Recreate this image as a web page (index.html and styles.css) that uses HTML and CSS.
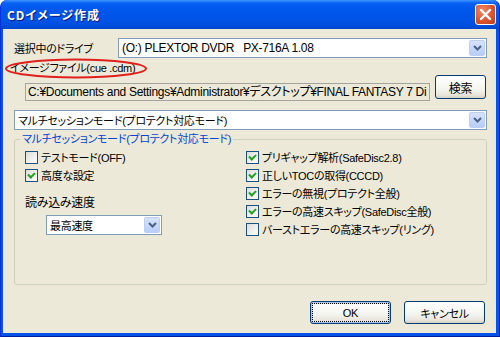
FILE: index.html
```html
<!DOCTYPE html>
<html lang="ja">
<head>
    <meta charset="UTF-8">
    <title>CDイメージ作成</title>
    <link rel="stylesheet" href="styles.css">
</head>
<body>
<div class="window">
    <div class="titlebar">
        <span class="title">CDイメージ作成</span>
        <span class="close">
            <svg width="13" height="13" viewBox="0 0 13 13"><path d="M2 2 L11 11 M11 2 L2 11" stroke="#fff" stroke-width="2.4" stroke-linecap="round"/></svg>
        </span>
    </div>
    <div class="client">
        <!-- drive -->
        <div class="row drive-row">
            <span class="label">選択中のドライブ</span>
            <div class="combo grow">
                <span class="combo-text">(O:) PLEXTOR DVDR   PX-716A 1.08</span>
                <span class="drop"><svg width="9" height="6" viewBox="0 0 9 6"><path d="M1 1 L4.5 4.5 L8 1" fill="none" stroke="#4d6185" stroke-width="2"/></svg></span>
            </div>
        </div>

        <!-- image file -->
        <div class="image-label">
            <span>イメージファイル(cue .cdm)</span>
            <svg class="ring" width="144" height="21" viewBox="0 0 144 21"><ellipse cx="72" cy="10.5" rx="70" ry="9" fill="none" stroke="#e0201c" stroke-width="2"/></svg>
        </div>
        <div class="row path-row">
            <div class="pathbox">C:¥Documents and Settings¥Administrator¥デスクトップ¥FINAL FANTASY 7 Di</div>
            <span class="btn search">検索</span>
        </div>

        <!-- mode -->
        <div class="combo mode">
            <span class="combo-text">マルチセッションモード(プロテクト対応モード)</span>
            <span class="drop"><svg width="9" height="6" viewBox="0 0 9 6"><path d="M1 1 L4.5 4.5 L8 1" fill="none" stroke="#4d6185" stroke-width="2"/></svg></span>
        </div>

        <fieldset class="group">
            <legend>マルチセッションモード(プロテクト対応モード)</legend>
            <div class="cols">
                <div class="col left">
                    <div class="check"><span class="box"></span>テストモード(OFF)</div>
                    <div class="check"><span class="box on"></span>高度な設定</div>
                    <div class="speed-label">読み込み速度</div>
                    <div class="combo speed">
                        <span class="combo-text">最高速度</span>
                        <span class="drop"><svg width="9" height="6" viewBox="0 0 9 6"><path d="M1 1 L4.5 4.5 L8 1" fill="none" stroke="#4d6185" stroke-width="2"/></svg></span>
                    </div>
                </div>
                <div class="col right">
                    <div class="check"><span class="box on"></span>プリギャップ解析(SafeDisc2.8)</div>
                    <div class="check"><span class="box on"></span>正しいTOCの取得(CCCD)</div>
                    <div class="check"><span class="box on"></span>エラーの無視(プロテクト全般)</div>
                    <div class="check"><span class="box on"></span>エラーの高速スキップ(SafeDisc全般)</div>
                    <div class="check"><span class="box"></span>バーストエラーの高速スキップ(リング)</div>
                </div>
            </div>
        </fieldset>

        <div class="actions">
            <span class="btn ok"><span class="focus">OK</span></span>
            <span class="btn cancel">キャンセル</span>
        </div>
    </div>
</div>
</body>
</html>
```

FILE: styles.css
```css
body {
    margin: 0;
    background: #fff;
    font-family: "Liberation Sans", "Noto Sans CJK JP", sans-serif;
    font-size: 11px;
    font-feature-settings: "palt";
    letter-spacing: -0.3px;
    color: #000;
}
.window {
    width: 500px;
    height: 337px;
    box-sizing: border-box;
    background: #0553e4;
    border-radius: 7px 7px 0 0;
    border-left: 1px solid #0831d9;
    border-bottom: 1px solid #001ea0;
    border-right: 1px solid #001ea0;
}
.titlebar {
    height: 29px;
    display: flex;
    align-items: center;
    border-radius: 7px 7px 0 0;
    background: linear-gradient(#3d95ff 0, #0a62f4 3px, #0058ee 8px, #0055e8 18px, #0050de 25px, #0046cc 29px);
}
.title {
    flex: 1;
    padding-left: 6px;
    color: #fff;
    font-family: "Noto Sans CJK JP", sans-serif;
    font-weight: bold;
    font-size: 12px;
    letter-spacing: 1px;
    text-shadow: 1px 1px #0a1883;
}
.close {
    width: 19px;
    height: 19px;
    margin-right: 3px;
    border: 1px solid #fff;
    border-radius: 3px;
    background: radial-gradient(circle at 35% 30%, #f08a6a, #d9552f 55%, #c23a17);
    display: flex;
    align-items: center;
    justify-content: center;
}
.client {
    height: 304px;
    margin: 0 3px 0 2px;
    padding: 9px 9px 0 11px;
    box-sizing: border-box;
    background: #ece9d8;
}
.row {
    display: flex;
}
.drive-row {
    align-items: center;
    height: 20px;
}
.drive-row .label {
    width: 104px;
}
.drive-row .combo {
    font-size: 12px;
}
.grow {
    flex: 1;
}
.combo {
    display: flex;
    align-items: center;
    height: 20px;
    box-sizing: border-box;
    border: 1px solid #7f9db9;
    background: #fff;
    padding: 0 1px 0 3px;
}
.combo-text {
    flex: 1;
    white-space: pre;
    overflow: hidden;
}
.drop {
    width: 16px;
    height: 16px;
    box-sizing: border-box;
    border: 1px solid #bccdf6;
    border-radius: 2px;
    background: linear-gradient(#d6e3fd, #b9cdf8);
    display: flex;
    align-items: center;
    justify-content: center;
}
.image-label {
    position: relative;
    height: 17px;
    line-height: 21px;
    margin-left: -4px;
}
.ring {
    position: absolute;
    left: -6px;
    top: 0;
}
.path-row {
    height: 26px;
    align-items: flex-start;
}
.pathbox {
    width: 405px;
    height: 18px;
    margin: 8px 0 0 11px;
    box-sizing: border-box;
    border: 1px solid #a5a49c;
    padding-left: 2px;
    font-size: 12px;
    line-height: 16px;
    white-space: nowrap;
    overflow: hidden;
}
.btn {
    display: flex;
    align-items: center;
    justify-content: center;
    box-sizing: border-box;
    border: 1px solid #003c74;
    border-radius: 3px;
    background: linear-gradient(#fff, #f4f4ef 60%, #e8e6dd 85%, #d6d0c5);
}
.search {
    width: 51px;
    height: 24px;
    margin-left: auto;
    margin-right: 1px;
    font-size: 12px;
}
.mode {
    margin-top: 9px;
}
.group {
    margin: 2px 0 0 0;
    padding: 2px 0 0 0;
    width: 473px;
    height: 153px;
    box-sizing: border-box;
    border: 1px solid #d0d0bf;
    border-radius: 3px;
}
.group legend {
    margin-left: 5px;
    padding: 0 2px;
    color: #0046d5;
    line-height: 14px;
}
.cols {
    display: flex;
}
.left {
    width: 221px;
    padding-left: 10px;
}
.check {
    display: flex;
    align-items: center;
    height: 18px;
    gap: 3px;
    white-space: nowrap;
}
.box {
    width: 13px;
    height: 13px;
    box-sizing: border-box;
    border: 1px solid #1c5180;
    background: linear-gradient(135deg, #dcdcd7, #fff);
    display: flex;
    align-items: center;
    justify-content: center;
}
.box.on::after {
    content: "";
    width: 5px;
    height: 3px;
    margin-top: -2px;
    border-left: 2px solid #21a121;
    border-bottom: 2px solid #21a121;
    transform: rotate(-45deg);
}
.speed-label {
    margin-top: 11px;
    height: 16px;
    line-height: 16px;
    font-size: 12px;
}
.speed {
    width: 116px;
    margin: 4px 0 0 21px;
}
.actions {
    display: flex;
    justify-content: flex-end;
    gap: 13px;
    margin-top: 16px;
    margin-right: 2px;
}
.actions .btn {
    width: 81px;
    height: 23px;
}
.ok {
    box-shadow: inset 0 0 0 1px #a8c6f2, inset 0 0 0 2px #cfe2fb;
}
.ok .focus {
    display: flex;
    align-items: center;
    justify-content: center;
    width: 77px;
    height: 19px;
    box-sizing: border-box;
    border: 1px dotted #000;
}
```
